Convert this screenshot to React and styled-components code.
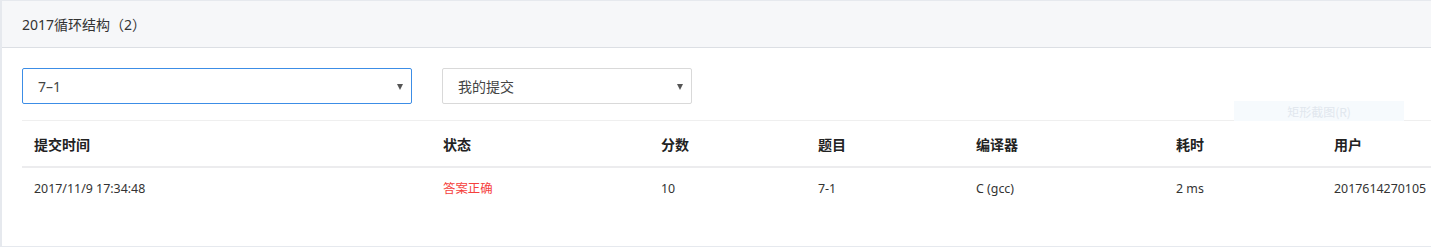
import React from "react";
import styled, { createGlobalStyle } from "styled-components";

const Global = createGlobalStyle`
  html, body { margin: 0; padding: 0; background: #fff; overflow: hidden; }
  body { font-family: "Noto Sans", "Noto Sans CJK SC", sans-serif; color: #333; }
  * { box-sizing: border-box; }
`;

const Card = styled.div`
  position: relative;
  width: 1480px;
  height: 247px;
  border-top: 1px solid #e6e9ee;
  border-left: 2px solid #e6e9ee;
  border-bottom: 1px solid #e6e9ee;
  background: #fff;
`;

const Header = styled.div`
  height: 47px;
  background: #f6f7f9;
  border-bottom: 1px solid #dcdfe4;
  display: flex;
  align-items: center;
  padding-left: 20px;
  font-size: 14px;
  color: #333;
  font-family: "Noto Sans", "Noto Sans CJK SC", sans-serif;
`;

const Body = styled.div`
  padding: 20px 0 0 20px;
`;

const Filters = styled.div`
  display: flex;
  gap: 30px;
  margin-bottom: 16px;
`;

const Select = styled.div`
  width: ${(p) => p.$w}px;
  height: 36px;
  border: 1px solid ${(p) => (p.$active ? "#3c8de6" : "#d9d9d9")};
  border-radius: 2px;
  display: flex;
  align-items: center;
  justify-content: space-between;
  padding: 0 8px 0 15px;
  font-size: 14px;
  color: #444;
  font-family: "Noto Sans", "Noto Sans CJK SC", sans-serif;
`;

const Arrow = styled.span`
  width: 0;
  height: 0;
  border-left: 3.5px solid transparent;
  border-right: 3.5px solid transparent;
  border-top: 6px solid #555;
  margin-top: 1px;
`;

const Table = styled.div`
  border-top: 1px solid #efefef;
`;

const Row = styled.div`
  display: grid;
  grid-template-columns: 409px 218px 157px 158px 200px 158px 1fr;
  height: ${(p) => (p.$head ? 47 : 40)}px;
  align-items: center;
  border-bottom: ${(p) => (p.$head ? "2px solid #ececee" : "none")};
`;

const Cell = styled.div`
  padding-left: 12px;
  font-size: ${(p) => (p.$head ? "14px" : "12.4px")};
  font-weight: ${(p) => (p.$head ? 700 : 400)};
  color: ${(p) => p.$color || (p.$head ? "#222" : "#333")};
  white-space: nowrap;
  font-family: "Noto Sans", "Noto Sans CJK SC", sans-serif;
`;

const Ghost = styled.div`
  position: absolute;
  left: 1232px;
  top: 100px;
  width: 170px;
  height: 20px;
  background: #f6fafd;
  color: #e1e7ee;
  font-size: 12px;
  display: flex;
  align-items: center;
  justify-content: center;
  font-family: "Noto Sans CJK SC", sans-serif;
`;

const heads = ["提交时间", "状态", "分数", "题目", "编译器", "耗时", "用户"];
const row = [
  { v: "2017/11/9 17:34:48" },
  { v: "答案正确", c: "#f5413c" },
  { v: "10" },
  { v: "7-1" },
  { v: "C (gcc)" },
  { v: "2 ms" },
  { v: "2017614270105" },
];

export default function App() {
  return (
    <>
      <Global />
      <Card>
        <Header>2017循环结构（2）</Header>
        <Body>
          <Filters>
            <Select $w={390} $active>
              <span>7–1</span>
              <Arrow />
            </Select>
            <Select $w={250}>
              <span>我的提交</span>
              <Arrow />
            </Select>
          </Filters>
          <Table>
            <Row $head>
              {heads.map((h) => (
                <Cell $head key={h}>{h}</Cell>
              ))}
            </Row>
            <Row>
              {row.map((r, i) => (
                <Cell key={i} $color={r.c}>{r.v}</Cell>
              ))}
            </Row>
          </Table>
        </Body>
        <Ghost>矩形截图(R)</Ghost>
      </Card>
    </>
  );
}
